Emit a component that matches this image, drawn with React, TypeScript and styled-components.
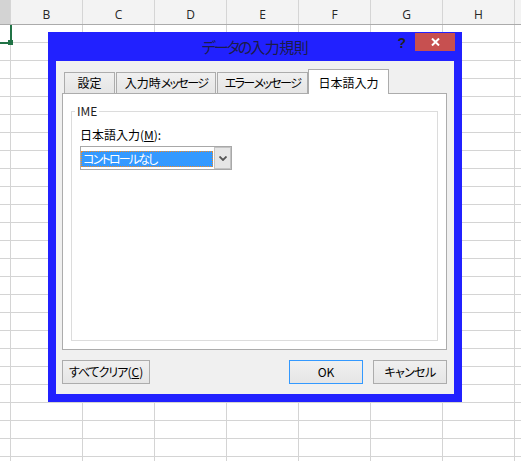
import React from "react";
import styled, { createGlobalStyle } from "styled-components";

const GlobalStyle = createGlobalStyle`
  html, body { margin: 0; padding: 0; background: #fff; overflow: hidden; }
  #root { width: 521px; height: 461px; }
`;

const UI_FONT = `"Noto Sans CJK JP", "Noto Sans", sans-serif`;

const Page = styled.div`
  position: relative;
  width: 521px;
  height: 461px;
  overflow: hidden;
  background: #fff;
`;

const Sheet = styled.div`
  display: flex;
  flex-direction: column;
`;

const HeaderRow = styled.div`
  display: flex;
  height: 25px;
  box-sizing: border-box;
  border-bottom: 1px solid #ababab;
  background: #f3f3f3;
`;

const HeaderCell = styled.div<{ $w: number; $sel?: boolean }>`
  flex: 0 0 ${(p) => p.$w}px;
  min-width: 0;
  box-sizing: border-box;
  border-right: 1px solid #d5d5d5;
  background: ${(p) => (p.$sel ? "#d3d3d3" : "transparent")};
  display: flex;
  align-items: center;
  justify-content: center;
  padding-top: 5px;
  font: 12px "Open Sans", "Noto Sans", sans-serif;
  color: #262626;
`;

const GridRow = styled.div`
  display: flex;
  height: 18px;
  box-sizing: border-box;
  border-bottom: 1px solid #d4d4d4;
`;

const GridCell = styled.div<{ $w: number }>`
  flex: 0 0 ${(p) => p.$w}px;
  box-sizing: border-box;
  border-right: 1px solid #d4d4d4;
`;

const Selection = styled.div`
  position: absolute;
  left: -10px;
  top: 25px;
  width: 22px;
  height: 19px;
  box-sizing: border-box;
  border-right: 2px solid #217346;
  border-bottom: 2px solid #217346;
`;

const FillHandle = styled.div`
  position: absolute;
  left: 8px;
  top: 40px;
  width: 5px;
  height: 5px;
  background: #217346;
`;

const Dialog = styled.div`
  position: absolute;
  left: 48px;
  top: 32px;
  width: 414px;
  height: 370px;
  box-sizing: border-box;
  background: #2121ff;
  padding: 0 8px 8px 8px;
  display: flex;
  flex-direction: column;
  font-family: ${UI_FONT};
  font-feature-settings: "palt";
  color: #000;
`;

const Kana = styled.span<{ $ls?: number }>`
  letter-spacing: ${(p) => p.$ls ?? -1.2}px;
`;

const TitleBar = styled.div`
  height: 29px;
  flex: 0 0 29px;
  display: grid;
  grid-template-columns: 1fr auto 1fr;
  align-items: start;
`;

const Title = styled.div`
  grid-column: 2;
  font-size: 15px;
  line-height: 20px;
  margin-top: 5px;
  color: #1c1c48;
  white-space: nowrap;
`;

const Controls = styled.div`
  grid-column: 3;
  justify-self: end;
  display: flex;
  align-items: flex-start;
  margin-right: -1px;
`;

const Help = styled.div`
  font: bold 14px "Liberation Sans", sans-serif;
  line-height: 16px;
  color: #222;
  margin-top: 3px;
  margin-right: 9px;
`;

const CloseBtn = styled.div`
  width: 40px;
  height: 18px;
  margin-top: 1px;
  background: #c75050;
  display: flex;
  align-items: center;
  justify-content: center;
`;

const Client = styled.div`
  flex: 1;
  background: #f0f0f0;
  padding: 8px 7px 10px 6px;
  display: flex;
  flex-direction: column;
`;

const TabStrip = styled.div`
  display: flex;
  align-items: flex-end;
  height: 24px;
  flex: 0 0 24px;
  padding-left: 2px;
  position: relative;
  z-index: 1;
`;

const Tab = styled.div<{ $w: number }>`
  flex: 0 0 ${(p) => p.$w}px;
  min-width: 0;
  overflow: hidden;
  height: 21px;
  box-sizing: border-box;
  border: 1px solid #acacac;
  border-bottom: none;
  background: linear-gradient(#f0f0f0, #e5e5e5);
  margin-right: 1px;
  font-size: 12px;
  line-height: 16px;
  display: flex;
  align-items: center;
  justify-content: center;
  white-space: pre;
`;

const ActiveTab = styled(Tab)`
  height: 25px;
  margin-bottom: -1px;
  margin-left: -1px;
  padding-top: 1px;
  background: #fff;
`;

const Panel = styled.div`
  height: 257px;
  flex: 0 0 257px;
  box-sizing: border-box;
  background: #fff;
  border: 1px solid #acacac;
  padding: 17px 8px 8px 8px;
  display: flex;
  flex-direction: column;
`;

const Group = styled.div`
  flex: 1;
  border: 1px solid #dcdcdc;
  padding: 0 8px;
  display: flex;
  flex-direction: column;
  align-items: flex-start;
`;

const Legend = styled.div`
  margin-top: -8px;
  margin-left: -5px;
  padding: 0 2px;
  background: #fff;
  font-size: 12px;
  line-height: 14px;
  color: #1e1e1e;
`;

const FieldLabel = styled.div`
  margin-top: 9px;
  font-size: 12px;
  line-height: 16px;
`;

const Combo = styled.div`
  margin-top: 3px;
  width: 152px;
  height: 24px;
  box-sizing: border-box;
  border: 1px solid #a8a8a8;
  background: #fff;
  display: flex;
`;

const ComboValue = styled.div`
  flex: 1;
  margin: 4px 1px 2px 0;
  box-sizing: border-box;
  background: #3399ff;
  color: #fff;
  border: 1px dotted #f08a24;
  padding-left: 1px;
  font-size: 12px;
  line-height: 14px;
  white-space: nowrap;
  overflow: hidden;
`;

const DropBtn = styled.div`
  flex: 0 0 17px;
  box-sizing: border-box;
  background: #e6e6e6;
  border: 1px solid #c3c3c3;
  display: flex;
  align-items: center;
  justify-content: center;
`;

const Footer = styled.div`
  margin-top: 10px;
  height: 24px;
  flex: 0 0 24px;
  display: flex;
  align-items: center;
`;

const Spacer = styled.div`
  flex: 1;
`;

const Button = styled.div<{ $w: number; $primary?: boolean; $gap?: number }>`
  flex: 0 0 ${(p) => p.$w}px;
  height: 24px;
  box-sizing: border-box;
  margin-left: ${(p) => p.$gap ?? 0}px;
  border: 1px solid ${(p) => (p.$primary ? "#3399ff" : "#acacac")};
  background: linear-gradient(#f0f0f0, #e5e5e5);
  font-size: 12px;
  line-height: 16px;
  display: flex;
  align-items: center;
  justify-content: center;
  white-space: nowrap;
`;

const COLS = [11, 72, 72, 72, 72, 72, 72, 72, 72];
const LETTERS = ["", "B", "C", "D", "E", "F", "G", "H", ""];

export default function App() {
  return (
    <Page>
      <GlobalStyle />
      <Sheet>
        <HeaderRow>
          {COLS.map((w, i) => (
            <HeaderCell key={i} $w={w} $sel={i === 0}>
              {LETTERS[i]}
            </HeaderCell>
          ))}
        </HeaderRow>
        {Array.from({ length: 25 }).map((_, r) => (
          <GridRow key={r}>
            {COLS.map((w, i) => (
              <GridCell key={i} $w={w} />
            ))}
          </GridRow>
        ))}
      </Sheet>
      <Selection />
      <FillHandle />

      <Dialog>
        <TitleBar>
          <Title>
            <Kana $ls={-2}>データの</Kana>
            <Kana $ls={-0.5}>入力規則</Kana>
          </Title>
          <Controls>
            <Help>?</Help>
            <CloseBtn>
              <svg width="9" height="8" viewBox="0 0 9 8">
                <path d="M1 0.5 L8 7.5 M8 0.5 L1 7.5" stroke="#fff" strokeWidth="2" />
              </svg>
            </CloseBtn>
          </Controls>
        </TitleBar>
        <Client>
          <TabStrip>
            <Tab $w={51}>設定</Tab>
            <Tab $w={100}>
              入力時<Kana $ls={-1.6}>メッセージ</Kana>
            </Tab>
            <Tab $w={91}>
              <Kana $ls={-1.6}>エラー</Kana> <Kana $ls={-1.6}>メッセージ</Kana>
            </Tab>
            <ActiveTab $w={81}>日本語入力</ActiveTab>
          </TabStrip>
          <Panel>
            <Group>
              <Legend>IME</Legend>
              <FieldLabel>
                日本語入力(<u>M</u>):
              </FieldLabel>
              <Combo>
                <ComboValue>
                  <Kana $ls={-1.8}>コントロールなし</Kana>
                </ComboValue>
                <DropBtn>
                  <svg width="8" height="5" viewBox="0 0 8 5">
                    <path d="M0.5 0.5 L4 4 L7.5 0.5" stroke="#555" strokeWidth="1.8" fill="none" />
                  </svg>
                </DropBtn>
              </Combo>
            </Group>
          </Panel>
          <Footer>
            <Button $w={88}>
              <Kana $ls={-1}>すべてクリア</Kana>(<u>C</u>)
            </Button>
            <Spacer />
            <Button $w={74} $primary>
              OK
            </Button>
            <Button $w={74} $gap={10}>
              <Kana $ls={-0.6}>キャンセル</Kana>
            </Button>
          </Footer>
        </Client>
      </Dialog>
    </Page>
  );
}
